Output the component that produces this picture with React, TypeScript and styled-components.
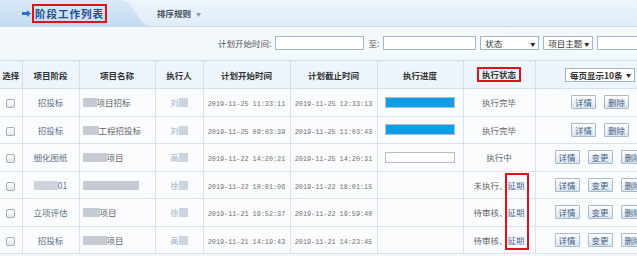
import styled, { createGlobalStyle } from "styled-components";

const GlobalStyle = createGlobalStyle`
  html, body {
    margin: 0;
    padding: 0;
  }
  body {
    background: #f3f8fd;
    overflow: hidden;
    font-family: "Noto Sans CJK SC", "Noto Sans", sans-serif;
  }
`;

const Page = styled.div`
  position: relative;
  width: 637px;
  height: 256px;
  overflow: hidden;
`;

const TabBar = styled.div`
  display: flex;
  align-items: center;
  height: 26px;
  border-bottom: 1px solid #c6dbee;
  background: linear-gradient(#edf5fc, #dfecf8);
`;

const ActiveTab = styled.div`
  position: relative;
  display: flex;
  align-items: center;
  gap: 1px;
  width: 120px;
  height: 100%;
  padding-left: 22px;
  box-sizing: border-box;
  background: linear-gradient(#d9e9f8, #c5dcf2);

  &::after {
    content: "";
    position: absolute;
    left: 100%;
    top: 0;
    width: 32px;
    height: 100%;
    background: linear-gradient(#d9e9f8, #c5dcf2);
    clip-path: path("M0 0 C16 0 16 26 32 26 L0 26 Z");
  }
`;

const TabTitle = styled.span`
  font-size: 10.5px;
  font-weight: bold;
  color: #1d4f8f;
  letter-spacing: 1px;
  line-height: 15px;
  padding: 0 1px 0 1px;
  border: 2px solid #e3101b;
`;

const SortMenu = styled.div`
  display: flex;
  align-items: center;
  gap: 5px;
  margin-left: 37px;
  font-size: 8.5px;
  font-weight: bold;
  color: #44505e;
`;

const Caret = styled.span`
  font-size: 5px;
  color: #8a9bb0;
  font-weight: normal;
`;

const FilterRow = styled.div`
  display: flex;
  align-items: center;
  gap: 4px;
  height: 14px;
  margin-top: 9px;
  padding-left: 218px;
  font-size: 8.5px;
  color: #555;
`;

const FilterLabel = styled.span`
  white-space: nowrap;
  line-height: 14px;
`;

const TextInput = styled.div<{ $w: number }>`
  flex: none;
  width: ${(p) => p.$w}px;
  height: 14px;
  box-sizing: border-box;
  border: 1px solid #a9b8c8;
  background: #fff;
`;

const SelectBox = styled.div<{ $w: number; $bold?: boolean; $center?: boolean }>`
  flex: none;
  display: flex;
  align-items: center;
  justify-content: space-between;
  width: ${(p) => p.$w}px;
  height: 14px;
  box-sizing: border-box;
  padding: 0 3px 0 4px;
  border: 1px solid #a6b5c4;
  background: #fff;
  font-size: 8.5px;
  color: #333;
  font-weight: ${(p) => (p.$bold ? "bold" : "normal")};
  white-space: nowrap;
  margin: ${(p) => (p.$center ? "0 auto" : "0")};
`;

const SelectArrow = styled.span`
  font-size: 5px;
  color: #222;
  font-weight: normal;
`;

const Table = styled.table`
  border-collapse: collapse;
  table-layout: fixed;
  width: 665px;
  margin-top: 10px;
  background: #fafcfe;
`;

const Th = styled.th`
  height: 27px;
  padding: 0;
  border: 1px solid #d3dfea;
  background: #edf4fb;
  font-size: 8.5px;
  font-weight: bold;
  color: #333;
  text-align: center;
  white-space: nowrap;

  &:first-child {
    border-left: none;
  }
`;

const Td = styled.td<{ $left?: boolean }>`
  height: 26.5px;
  padding: 0 0 0 ${(p) => (p.$left ? "3px" : "0")};
  border: 1px solid #d9e3ed;
  font-size: 8.5px;
  color: #666;
  text-align: ${(p) => (p.$left ? "left" : "center")};
  white-space: nowrap;
  overflow: hidden;

  &:first-child {
    border-left: none;
  }
`;

const StageText = styled.span`
  color: #5d7088;
`;

const WhoText = styled.span`
  color: #9aaec6;
`;

const DateText = styled.span`
  font-family: "Liberation Mono", monospace;
  font-size: 6.8px;
  color: #707070;
`;

const Redact = styled.span<{ $w: number; $tone?: string }>`
  display: inline-block;
  width: ${(p) => p.$w}px;
  height: 9px;
  vertical-align: -1px;
  background: ${(p) => p.$tone ?? "#c6cbd3"};
  filter: blur(0.5px);
`;

const Check = styled.span`
  display: inline-block;
  width: 7px;
  height: 7px;
  border: 1px solid #a3afbb;
  border-radius: 2px;
  background: linear-gradient(#ffffff, #e2e6ea);
  vertical-align: middle;
`;

const Bar = styled.div`
  width: 70px;
  height: 11px;
  margin: 0 auto;
  box-sizing: border-box;
  border: 1px solid #b5bcc4;
  background: #fff;
`;

const BarFill = styled.div`
  height: 100%;
  background: #0b9de6;
`;

const HeaderMark = styled.span`
  display: inline-block;
  padding: 0 3px;
  line-height: 11px;
  border: 2px solid #e3101b;
`;

const Delay = styled.span`
  color: #4a6a96;
`;

const Actions = styled.div`
  display: flex;
  justify-content: center;
  gap: 8px;
`;

const Btn = styled.button`
  flex: none;
  width: 25px;
  height: 14px;
  padding: 0;
  border: 1px solid #a9bacb;
  border-radius: 1px;
  background: linear-gradient(#ffffff, #dae5f0);
  font-family: "Noto Sans CJK SC", sans-serif;
  font-size: 8.5px;
  line-height: 12px;
  color: #3f5f86;
`;

const DelayMark = styled.div`
  position: absolute;
  left: 505px;
  top: 173px;
  width: 24px;
  height: 77px;
  box-sizing: border-box;
  border: 2px solid #e3101b;
`;

type Row = {
  stage: string;
  stageBlk?: number;
  nameBlk: number;
  name: string;
  who: string;
  start: string;
  end: string;
  progress: number | null;
  status: string;
  delayed?: boolean;
  actions: string[];
};

const rows: Row[] = [
  { stage: "招投标", nameBlk: 14, name: "项目招标", who: "刘", start: "2019-11-25 11:33:11", end: "2019-11-25 12:33:13", progress: 100, status: "执行完毕", actions: ["详情", "删除"] },
  { stage: "招投标", nameBlk: 16, name: "工程招投标", who: "刘", start: "2019-11-25 09:03:39", end: "2019-11-25 11:03:43", progress: 100, status: "执行完毕", actions: ["详情", "删除"] },
  { stage: "细化图纸", nameBlk: 24, name: "项目", who: "高", start: "2019-11-22 14:20:21", end: "2019-11-25 14:20:31", progress: 0, status: "执行中", actions: ["详情", "变更", "删除"] },
  { stage: "01", stageBlk: 24, nameBlk: 56, name: "", who: "徐", start: "2019-11-22 10:01:06", end: "2019-11-22 18:01:15", progress: null, status: "未执行、", delayed: true, actions: ["详情", "变更", "删除"] },
  { stage: "立项评估", nameBlk: 17, name: "项目", who: "徐", start: "2019-11-21 19:52:37", end: "2019-11-22 19:59:40", progress: null, status: "待审核、", delayed: true, actions: ["详情", "变更", "删除"] },
  { stage: "招投标", nameBlk: 24, name: "项目", who: "高", start: "2019-11-21 14:19:43", end: "2019-11-21 14:23:45", progress: null, status: "待审核、", delayed: true, actions: ["详情", "变更", "删除"] },
];

const widths = [22, 57, 76, 48, 87, 87, 86, 72, 130];

export default function App() {
  return (
    <Page>
      <GlobalStyle />
      <TabBar>
        <ActiveTab>
          <svg width="9" height="7" viewBox="0 0 9 7">
            <path d="M0 2h5V0l4 3.5L5 7V5H0z" fill="#2a72c8" />
          </svg>
          <TabTitle>阶段工作列表</TabTitle>
        </ActiveTab>
        <SortMenu>
          排序规则 <Caret>▼</Caret>
        </SortMenu>
      </TabBar>

      <FilterRow>
        <FilterLabel>计划开始时间:</FilterLabel>
        <TextInput $w={89} />
        <FilterLabel>至:</FilterLabel>
        <TextInput $w={93} />
        <SelectBox $w={59}>
          状态 <SelectArrow>▼</SelectArrow>
        </SelectBox>
        <SelectBox $w={50}>
          项目主题 <SelectArrow>▼</SelectArrow>
        </SelectBox>
        <TextInput $w={60} />
      </FilterRow>

      <Table>
        <colgroup>
          {widths.map((w, i) => (
            <col key={i} style={{ width: w }} />
          ))}
        </colgroup>
        <thead>
          <tr>
            <Th>选择</Th>
            <Th>项目阶段</Th>
            <Th>项目名称</Th>
            <Th>执行人</Th>
            <Th>计划开始时间</Th>
            <Th>计划截止时间</Th>
            <Th>执行进度</Th>
            <Th>
              <HeaderMark>执行状态</HeaderMark>
            </Th>
            <Th>
              <SelectBox $w={70} $bold $center>
                每页显示10条 <SelectArrow>▼</SelectArrow>
              </SelectBox>
            </Th>
          </tr>
        </thead>
        <tbody>
          {rows.map((r, i) => (
            <tr key={i}>
              <Td>
                <Check />
              </Td>
              <Td>
                {r.stageBlk && <Redact $w={r.stageBlk} $tone="#cdd4dc" />}
                <StageText>{r.stage}</StageText>
              </Td>
              <Td $left>
                <Redact $w={r.nameBlk} />
                {r.name}
              </Td>
              <Td>
                <WhoText>{r.who}</WhoText>
                <Redact $w={9} $tone="#cbd5e0" />
              </Td>
              <Td>
                <DateText>{r.start}</DateText>
              </Td>
              <Td>
                <DateText>{r.end}</DateText>
              </Td>
              <Td>
                {r.progress !== null && (
                  <Bar>
                    <BarFill style={{ width: `${r.progress}%` }} />
                  </Bar>
                )}
              </Td>
              <Td>
                {r.status}
                {r.delayed && <Delay>延期</Delay>}
              </Td>
              <Td>
                <Actions>
                  {r.actions.map((a) => (
                    <Btn key={a}>{a}</Btn>
                  ))}
                </Actions>
              </Td>
            </tr>
          ))}
        </tbody>
      </Table>

      <DelayMark />
    </Page>
  );
}
